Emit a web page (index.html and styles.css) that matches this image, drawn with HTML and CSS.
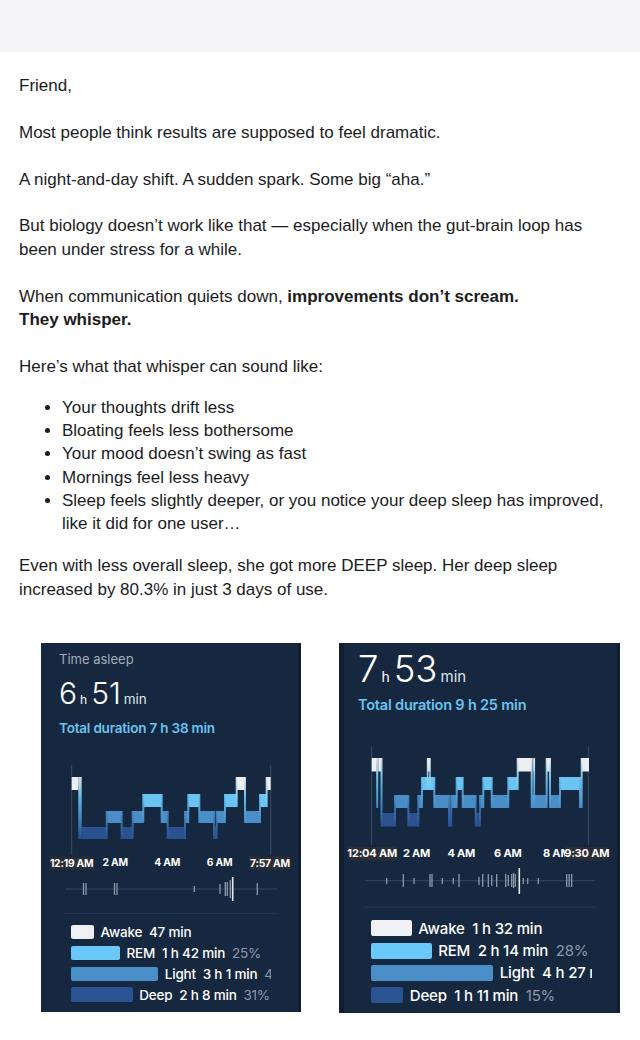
FILE: index.html
```html
<!DOCTYPE html>
<html lang="en">
<head>
<meta charset="utf-8">
<title>Friend</title>
<link rel="stylesheet" href="styles.css">
</head>
<body>
<div class="topbar"></div>
<div class="content">
  <p>Friend,</p>
  <p>Most people think results are supposed to feel dramatic.</p>
  <p>A night-and-day shift. A sudden spark. Some big “aha.”</p>
  <p>But biology doesn’t work like that — especially when the gut-brain loop has been under stress for a while.</p>
  <p>When communication quiets down, <strong>improvements don’t scream.<br>They whisper.</strong></p>
  <p class="intro">Here’s what that whisper can sound like:</p>
  <ul class="list">
    <li>Your thoughts drift less</li>
    <li>Bloating feels less bothersome</li>
    <li>Your mood doesn’t swing as fast</li>
    <li>Mornings feel less heavy</li>
    <li>Sleep feels slightly deeper, or you notice your deep sleep has improved, like it did for one user…</li>
  </ul>
  <p class="last">Even with less overall sleep, she got more DEEP sleep. Her deep sleep increased by 80.3% in just 3 days of use.</p>

  <svg class="defs" width="0" height="0" aria-hidden="true">
    <defs>
      <linearGradient id="gAR" x1="0" y1="0" x2="0" y2="1">
        <stop offset="0" stop-color="#eceef1"/><stop offset="1" stop-color="#6ac5f5"/>
      </linearGradient>
      <linearGradient id="gAL" x1="0" y1="0" x2="0" y2="1">
        <stop offset="0" stop-color="#eceef1"/><stop offset="0.5" stop-color="#6ac5f5"/><stop offset="1" stop-color="#4a8ec8"/>
      </linearGradient>
      <linearGradient id="gAD" x1="0" y1="0" x2="0" y2="1">
        <stop offset="0" stop-color="#eceef1"/><stop offset="0.35" stop-color="#6ac5f5"/><stop offset="0.7" stop-color="#4a8ec8"/><stop offset="1" stop-color="#2b5290"/>
      </linearGradient>
      <linearGradient id="gRL" x1="0" y1="0" x2="0" y2="1">
        <stop offset="0" stop-color="#6ac5f5"/><stop offset="1" stop-color="#4a8ec8"/>
      </linearGradient>
      <linearGradient id="gLD" x1="0" y1="0" x2="0" y2="1">
        <stop offset="0" stop-color="#4a8ec8"/><stop offset="1" stop-color="#2b5290"/>
      </linearGradient>
      <clipPath id="clip8am">
        <rect x="339" y="840" width="226" height="30"/>
      </clipPath>
    </defs>
  </svg>

  <div class="shots">
    <div class="shot shot-a">
      <div class="shot-label">Time asleep</div>
      <div class="shot-big"><span>6</span><span class="u-h">h</span><span>51</span><span class="u-min">min</span></div>
      <div class="shot-total">Total duration 7 h 38 min</div>
      <svg class="chart chart-a" width="260" height="180" viewBox="41 740 260 180">
        <line class="axis" x1="71.7" y1="765" x2="71.7" y2="855"/>
        <line class="axis" x1="270.7" y1="765" x2="270.7" y2="855"/>
        <g class="lv-l">
          <rect x="106.7" y="811" width="15" height="12"/>
          <rect x="132.7" y="811" width="10.6" height="12"/>
          <rect x="161.7" y="811" width="6" height="12"/>
          <rect x="185" y="811" width="3.3" height="12"/>
          <rect x="199.3" y="811" width="14.7" height="12"/>
          <rect x="216.7" y="811" width="8.3" height="12"/>
          <rect x="245" y="811" width="15" height="12"/>
        </g>
        <g class="lv-d">
          <rect x="81.7" y="827" width="25" height="12"/>
          <rect x="121.7" y="827" width="11" height="12"/>
          <rect x="167.7" y="827" width="17.3" height="12"/>
          <rect x="214" y="827" width="2.7" height="12"/>
        </g>
        <g class="lv-r">
          <rect x="143.3" y="794" width="18.4" height="13"/>
          <rect x="188.3" y="794" width="11" height="13"/>
          <rect x="225" y="794" width="11.7" height="13"/>
          <rect x="260" y="794" width="6.7" height="13"/>
        </g>
        <g class="lv-a">
          <rect x="71.7" y="777" width="6.8" height="13"/>
          <rect x="236.7" y="777" width="8.3" height="13"/>
          <rect x="266.7" y="777" width="4" height="13"/>
        </g>
        <g class="tr">
          <rect x="78.3" y="777" width="3.4" height="62" fill="url(#gAD)"/>
          <rect x="105.7" y="811" width="2" height="28" fill="url(#gLD)"/>
          <rect x="120.7" y="811" width="2" height="28" fill="url(#gLD)"/>
          <rect x="131.7" y="811" width="2" height="28" fill="url(#gLD)"/>
          <rect x="142.3" y="794" width="2" height="29" fill="url(#gRL)"/>
          <rect x="160.7" y="794" width="2" height="29" fill="url(#gRL)"/>
          <rect x="166.7" y="811" width="2" height="28" fill="url(#gLD)"/>
          <rect x="184" y="811" width="2" height="28" fill="url(#gLD)"/>
          <rect x="187.3" y="794" width="2" height="29" fill="url(#gRL)"/>
          <rect x="198.3" y="794" width="2" height="29" fill="url(#gRL)"/>
          <rect x="213" y="811" width="2" height="28" fill="url(#gLD)"/>
          <rect x="215.7" y="811" width="2" height="28" fill="url(#gLD)"/>
          <rect x="224" y="794" width="2" height="29" fill="url(#gRL)"/>
          <rect x="235.7" y="777" width="2" height="30" fill="url(#gAR)"/>
          <rect x="244" y="777" width="2" height="46" fill="url(#gAL)"/>
          <rect x="259" y="794" width="2" height="29" fill="url(#gRL)"/>
          <rect x="265.7" y="777" width="2" height="30" fill="url(#gAR)"/>
        </g>

        <rect class="tbox" x="50" y="856.5" width="43.5" height="13" rx="1"/>
        <rect class="tbox" x="249.3" y="856.5" width="41.5" height="13" rx="1"/>
        <text class="tl" x="71.7" y="866.5" text-anchor="middle">12:19 AM</text>
        <text class="tl" x="115.3" y="865.5" text-anchor="middle">2 AM</text>
        <text class="tl" x="167.2" y="865.5" text-anchor="middle">4 AM</text>
        <text class="tl" x="219.5" y="865.5" text-anchor="middle">6 AM</text>
        <text class="tl" x="270" y="866.5" text-anchor="middle">7:57 AM</text>

        <line class="mv-base" x1="65" y1="889" x2="277" y2="889"/>
        <g class="mv">
          <line x1="83.5" y1="883" x2="83.5" y2="895"/>
          <line x1="86" y1="883" x2="86" y2="895"/>
          <line x1="114.5" y1="883" x2="114.5" y2="895"/>
          <line x1="117" y1="883" x2="117" y2="895"/>
          <line x1="194.3" y1="886" x2="194.3" y2="892"/>
          <line x1="220" y1="884" x2="220" y2="894"/>
          <line x1="225.3" y1="882" x2="225.3" y2="896"/>
          <line x1="227.3" y1="882" x2="227.3" y2="896"/>
          <line x1="230.3" y1="880" x2="230.3" y2="898"/>
          <line x1="257.3" y1="883" x2="257.3" y2="895"/>
        </g>
        <line class="mv-tall" x1="232.7" y1="877" x2="232.7" y2="901"/>
        <line class="sep" x1="65" y1="913.5" x2="277" y2="913.5"/>
      </svg>
      <div class="legend legend-a">
        <div class="row"><span class="bar awake" style="width:23.3px"></span><span class="txt">Awake&nbsp; 47 min</span></div>
        <div class="row"><span class="bar rem" style="width:49.3px"></span><span class="txt">REM&nbsp; 1 h 42 min&nbsp; <span class="pct">25%</span></span></div>
        <div class="row"><span class="bar light" style="width:87.6px"></span><span class="txt">Light&nbsp; 3 h 1 min&nbsp; <span class="pct">44%</span></span></div>
        <div class="row"><span class="bar deep" style="width:62px"></span><span class="txt">Deep&nbsp; 2 h 8 min&nbsp; <span class="pct">31%</span></span></div>
      </div>
    </div>

    <div class="shot shot-b">
      <div class="shot-big"><span>7</span><span class="u-h">h</span><span>53</span><span class="u-min">min</span></div>
      <div class="shot-total">Total duration 9 h 25 min</div>
      <svg class="chart chart-b" width="281" height="185" viewBox="339 730 281 185">
        <line class="axis" x1="371.7" y1="746.7" x2="371.7" y2="845"/>
        <line class="axis" x1="588.3" y1="746.7" x2="588.3" y2="845"/>
        <g class="lv-l">
          <rect x="395" y="795" width="13.3" height="13"/>
          <rect x="418.3" y="795" width="3.7" height="13"/>
          <rect x="434.3" y="795" width="14.7" height="13"/>
          <rect x="451" y="795" width="5.7" height="13"/>
          <rect x="462.7" y="795" width="13" height="13"/>
          <rect x="480" y="795" width="3.3" height="13"/>
          <rect x="491.7" y="795" width="16.6" height="13"/>
          <rect x="531.7" y="795" width="15" height="13"/>
          <rect x="550" y="795" width="10" height="13"/>
          <rect x="580" y="795" width="1.5" height="13"/>
        </g>
        <g class="lv-d">
          <rect x="382" y="813" width="13" height="13.5"/>
          <rect x="408.3" y="813" width="10" height="13.5"/>
          <rect x="449" y="813" width="2" height="13.5"/>
          <rect x="475.7" y="813" width="4.3" height="13.5"/>
        </g>
        <g class="lv-r">
          <rect x="422" y="777" width="12.3" height="13"/>
          <rect x="456.7" y="777" width="6" height="13"/>
          <rect x="483.3" y="777" width="8.4" height="13"/>
          <rect x="508.3" y="777" width="9.4" height="13"/>
          <rect x="560" y="777" width="20" height="13"/>
        </g>
        <g class="lv-a">
          <rect x="371.7" y="758" width="5" height="13.5"/>
          <rect x="378.3" y="758" width="2.7" height="13.5"/>
          <rect x="427.3" y="758" width="2.7" height="13.5"/>
          <rect x="517.7" y="758" width="14" height="13.5"/>
          <rect x="533.5" y="758" width="1.5" height="13.5"/>
          <rect x="546.7" y="758" width="3.3" height="13.5"/>
          <rect x="581.5" y="758" width="7.5" height="13.5"/>
        </g>
        <g class="tr">
          <rect x="376.2" y="758" width="2" height="50" fill="url(#gAL)"/>
          <rect x="380.5" y="758" width="2" height="68.5" fill="url(#gAD)"/>
          <rect x="394" y="795" width="2" height="31.5" fill="url(#gLD)"/>
          <rect x="407.3" y="795" width="2" height="31.5" fill="url(#gLD)"/>
          <rect x="417.3" y="795" width="2" height="31.5" fill="url(#gLD)"/>
          <rect x="421" y="777" width="2" height="31" fill="url(#gRL)"/>
          <rect x="426.8" y="758" width="1.6" height="32" fill="url(#gAR)"/>
          <rect x="429.2" y="758" width="1.6" height="32" fill="url(#gAR)"/>
          <rect x="433.3" y="777" width="2" height="31" fill="url(#gRL)"/>
          <rect x="448" y="795" width="2" height="31.5" fill="url(#gLD)"/>
          <rect x="450.2" y="795" width="2" height="31.5" fill="url(#gLD)"/>
          <rect x="455.7" y="777" width="2" height="31" fill="url(#gRL)"/>
          <rect x="461.7" y="777" width="2" height="31" fill="url(#gRL)"/>
          <rect x="474.7" y="795" width="2" height="31.5" fill="url(#gLD)"/>
          <rect x="479" y="795" width="2" height="31.5" fill="url(#gLD)"/>
          <rect x="482.3" y="777" width="2" height="31" fill="url(#gRL)"/>
          <rect x="490.7" y="777" width="2" height="31" fill="url(#gRL)"/>
          <rect x="507.3" y="777" width="2" height="31" fill="url(#gRL)"/>
          <rect x="516.7" y="758" width="2" height="32" fill="url(#gAR)"/>
          <rect x="530.7" y="758" width="2" height="50" fill="url(#gAL)"/>
          <rect x="533.3" y="758" width="1.8" height="50" fill="url(#gAL)"/>
          <rect x="545.7" y="758" width="2" height="50" fill="url(#gAL)"/>
          <rect x="549" y="758" width="2" height="50" fill="url(#gAL)"/>
          <rect x="559" y="777" width="2" height="31" fill="url(#gRL)"/>
          <rect x="579" y="777" width="2" height="31" fill="url(#gRL)"/>
          <rect x="580.7" y="758" width="2" height="50" fill="url(#gAL)"/>
        </g>

        <rect class="tbox" x="347.7" y="847" width="49" height="13.5" rx="1"/>
        <text class="tl tl-b" x="372.2" y="857.3" text-anchor="middle">12:04 AM</text>
        <text class="tl tl-b" x="416.5" y="856.5" text-anchor="middle">2 AM</text>
        <text class="tl tl-b" x="461.3" y="856.5" text-anchor="middle">4 AM</text>
        <text class="tl tl-b" x="507.8" y="856.5" text-anchor="middle">6 AM</text>
        <text class="tl tl-b" x="543" y="856.5" clip-path="url(#clip8am)">8 AM</text>
        <rect class="tbox" x="565" y="847" width="43.3" height="13.5" rx="1"/>
        <text class="tl tl-b" x="586.7" y="857.3" text-anchor="middle">9:30 AM</text>

        <line class="mv-base" x1="365" y1="880.7" x2="595" y2="880.7"/>
        <g class="mv">
          <line x1="386.7" y1="878" x2="386.7" y2="884"/>
          <line x1="403.3" y1="874" x2="403.3" y2="887"/>
          <line x1="414" y1="878" x2="414" y2="884"/>
          <line x1="430" y1="874" x2="430" y2="887"/>
          <line x1="432" y1="874" x2="432" y2="887"/>
          <line x1="442.3" y1="878" x2="442.3" y2="884"/>
          <line x1="453.3" y1="878" x2="453.3" y2="884"/>
          <line x1="459" y1="874" x2="459" y2="887"/>
          <line x1="479" y1="877" x2="479" y2="885"/>
          <line x1="482.7" y1="874" x2="482.7" y2="887"/>
          <line x1="488.3" y1="874" x2="488.3" y2="887"/>
          <line x1="491.7" y1="875" x2="491.7" y2="886"/>
          <line x1="496.7" y1="874" x2="496.7" y2="887"/>
          <line x1="505.7" y1="874" x2="505.7" y2="887"/>
          <line x1="508.3" y1="875" x2="508.3" y2="886"/>
          <line x1="511.7" y1="874" x2="511.7" y2="887"/>
          <line x1="513.5" y1="873" x2="513.5" y2="888"/>
          <line x1="515.3" y1="874" x2="515.3" y2="887"/>
          <line x1="523.3" y1="878" x2="523.3" y2="884"/>
          <line x1="527.7" y1="878" x2="527.7" y2="884"/>
          <line x1="538.3" y1="878" x2="538.3" y2="884"/>
          <line x1="566.7" y1="874" x2="566.7" y2="887"/>
          <line x1="569.2" y1="874" x2="569.2" y2="887"/>
          <line x1="571.7" y1="874" x2="571.7" y2="887"/>
        </g>
        <line class="mv-tall" x1="519.3" y1="868" x2="519.3" y2="894"/>
        <line class="sep" x1="365" y1="907" x2="595" y2="907"/>
      </svg>
      <div class="legend legend-b">
        <div class="row"><span class="bar awake" style="width:41px"></span><span class="txt">Awake&nbsp; 1 h 32 min</span></div>
        <div class="row"><span class="bar rem" style="width:61px"></span><span class="txt">REM&nbsp; 2 h 14 min&nbsp; <span class="pct">28%</span></span></div>
        <div class="row"><span class="bar light" style="width:122.6px"></span><span class="txt">Light&nbsp; 4 h 27 min&nbsp; <span class="pct">57%</span></span></div>
        <div class="row"><span class="bar deep" style="width:32.6px"></span><span class="txt">Deep&nbsp; 1 h 11 min&nbsp; <span class="pct">15%</span></span></div>
      </div>
    </div>
  </div>
</div>
</body>
</html>
```

FILE: styles.css
```css
html, body {
  margin: 0;
  padding: 0;
  background: #ffffff;
}
body {
  font-family: "Liberation Sans", Arial, sans-serif;
  color: #1c1c1e;
}
.topbar {
  height: 52px;
  background: #f5f5f7;
}
.content {
  padding: 22px 19px 0;
}
.content p {
  margin: 0 0 23.4px;
  font-size: 17px;
  line-height: 23.4px;
}
.content p.intro {
  margin-bottom: 17.6px;
}
.content p.last {
  margin-bottom: 0;
}
.list {
  margin: 0 0 18.6px;
  padding-left: 43px;
  font-size: 17px;
  line-height: 23.3px;
}
strong {
  font-weight: 700;
}
.defs {
  position: absolute;
  width: 0;
  height: 0;
  overflow: hidden;
}

/* screenshots */
.shots {
  display: flex;
  align-items: flex-start;
  gap: 38px;
  margin-top: 42.5px;
  padding-left: 22px;
}
.shot {
  background: #152840;
  overflow: hidden;
  display: flex;
  flex-direction: column;
  font-family: Inter, "Noto Sans", sans-serif;
  color: #ffffff;
}
.shot-a {
  width: 260px;
  height: 369px;
  padding: 8px 0 0 18px;
  box-sizing: border-box;
  box-shadow: inset -3px 0 0 #0f1e31;
}
.shot-b {
  width: 281px;
  height: 370px;
  padding: 6px 0 0 19px;
  box-sizing: border-box;
  box-shadow: inset 5px 0 0 #0f1e31, inset -3px 0 0 #0f1e31;
}
.shot-label {
  font-size: 13px;
  line-height: 16px;
  color: #a2aebd;
}
.shot-big {
  display: flex;
  align-items: baseline;
  font-weight: 300;
  white-space: nowrap;
}
.shot-a .shot-big {
  font-size: 30px;
  line-height: 34px;
  height: 34px;
  margin-top: 9px;
}
.shot-b .shot-big {
  font-size: 36.5px;
  line-height: 40px;
  height: 40px;
}
.u-h,
.u-min {
  line-height: 1;
  font-weight: 400;
}
.u-h {
  margin: 0 4px 0 3px;
}
.u-min {
  margin-left: 3px;
  color: #dfe4ea;
}
.shot-a .u-h { font-size: 12px; }
.shot-a .u-min { font-size: 13.5px; }
.shot-b .u-h { font-size: 14px; }
.shot-b .u-min { font-size: 15px; }
.shot-total {
  font-weight: 600;
  color: #6cc3ef;
  white-space: nowrap;
  letter-spacing: -0.2px;
}
.shot-a .shot-total {
  font-size: 13.5px;
  line-height: 18px;
  margin-top: 9px;
}
.shot-b .shot-total {
  font-size: 14.5px;
  line-height: 18px;
  margin-top: 7px;
}
.chart {
  display: block;
  flex: none;
}
.chart-a {
  margin: 2.5px 0 0 -18px;
}
.chart-b {
  margin: 15.5px 0 0 -19px;
}
.axis {
  stroke: #3a4c62;
  stroke-width: 1;
}
.lv-a rect { fill: #eceef1; }
.lv-r rect { fill: #6ac5f5; }
.lv-l rect { fill: #4a8ec8; }
.lv-d rect { fill: #2b5290; }
.tr rect { opacity: 0.9; }
.tbox { fill: #2b2d34; }
.tl {
  font-family: Inter, "Noto Sans", sans-serif;
  font-weight: 700;
  font-size: 10.3px;
  fill: #ffffff;
  letter-spacing: -0.2px;
}
.tl-b {
  font-size: 11px;
}
.mv-base {
  stroke: #34465c;
  stroke-width: 1;
}
.mv line {
  stroke: #8e99a8;
  stroke-width: 1.3;
}
.mv-tall {
  stroke: #e6e9ee;
  stroke-width: 1.6;
}
.sep {
  stroke: #1f3450;
  stroke-width: 1;
}

.legend {
  display: flex;
  flex-direction: column;
  overflow: hidden;
  white-space: nowrap;
}
.legend-a {
  margin: 5px 0 0 11.7px;
  width: 200px;
  gap: 6.3px;
}
.legend-b {
  margin: 5.2px 0 0 12.7px;
  width: 221px;
  gap: 6.4px;
}
.row {
  display: flex;
  align-items: center;
  gap: 6.5px;
}
.legend-a .row { height: 14.5px; }
.legend-b .row { height: 16px; }
.bar {
  display: block;
  flex: none;
  height: 100%;
  border-radius: 2px;
}
.bar.awake { background: #eef0f3; }
.bar.rem { background: #6ac8f8; }
.bar.light { background: #4a8fc8; }
.bar.deep { background: #2a5391; }
.txt {
  font-weight: 500;
  letter-spacing: -0.2px;
}
.legend-a .txt { font-size: 13.5px; }
.legend-b .txt { font-size: 15px; }
.pct {
  color: #8d99a8;
  font-weight: 400;
}
```
